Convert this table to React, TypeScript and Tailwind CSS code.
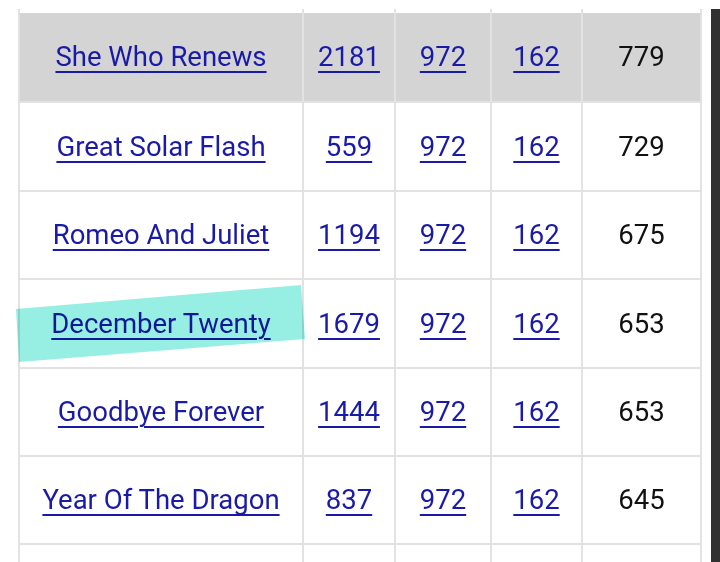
import React from "react";

type Row = { name: string; a: string; b: string; c: string; d: string; header?: boolean };

const rows: Row[] = [
  { name: "She Who Renews", a: "2181", b: "972", c: "162", d: "779", header: true },
  { name: "Great Solar Flash", a: "559", b: "972", c: "162", d: "729" },
  { name: "Romeo And Juliet", a: "1194", b: "972", c: "162", d: "675" },
  { name: "December Twenty", a: "1679", b: "972", c: "162", d: "653" },
  { name: "Goodbye Forever", a: "1444", b: "972", c: "162", d: "653" },
  { name: "Year Of The Dragon", a: "837", b: "972", c: "162", d: "645" },
];

const heights = ["h-[90px]", "h-[89px]", "h-[88px]", "h-[89px]", "h-[88px]", "h-[88px]"];

const linkCls =
  "text-[#1a1aa8] underline decoration-2 underline-offset-[5px] cursor-pointer";

function Cells({ r }: { r?: Row }) {
  return (
    <>
      <div className="w-[286px] shrink-0 border-l-2 border-r-2 border-[#e2e2e2] flex items-center justify-center">
        {r && <a className={linkCls}>{r.name}</a>}
      </div>
      <div className="w-[92px] shrink-0 border-r-2 border-[#e2e2e2] flex items-center justify-center">
        {r && <a className={linkCls}>{r.a}</a>}
      </div>
      <div className="w-[96px] shrink-0 border-r-2 border-[#e2e2e2] flex items-center justify-center">
        {r && <a className={linkCls}>{r.b}</a>}
      </div>
      <div className="w-[91px] shrink-0 border-r-2 border-[#e2e2e2] flex items-center justify-center">
        {r && <a className={linkCls}>{r.c}</a>}
      </div>
      <div className="w-[119px] shrink-0 border-r-2 border-[#e2e2e2] flex items-center justify-center text-[#111]">
        {r && <span>{r.d}</span>}
      </div>
    </>
  );
}

export default function App() {
  return (
    <div
      className="relative w-[720px] h-[562px] overflow-hidden bg-white flex items-start"
      style={{ fontFamily: "Roboto, 'Noto Sans', sans-serif" }}
    >
      <div className="pl-[18px] pt-[9px] flex flex-col text-[27.5px] leading-none">
        <div className="flex h-[4px] shrink-0">
          <Cells />
        </div>
        {rows.map((r, i) => (
          <div
            key={r.name}
            className={`flex shrink-0 border-b-2 border-[#e2e2e2] ${heights[i]} ${r.header ? "bg-[#d4d4d4]" : "bg-white"}`}
          >
            <Cells r={r} />
          </div>
        ))}
        <div className="flex h-[40px] shrink-0">
          <Cells />
        </div>
      </div>
      <div className="ml-[9px] mt-[9px] w-[9px] h-[553px] shrink-0 bg-[#313131]" />
      <svg
        className="absolute left-0 top-0 pointer-events-none mix-blend-multiply"
        width="720"
        height="562"
      >
        <polygon points="16,309 301,285 305,339 19,362" fill="#97efe3" />
      </svg>
    </div>
  );
}
